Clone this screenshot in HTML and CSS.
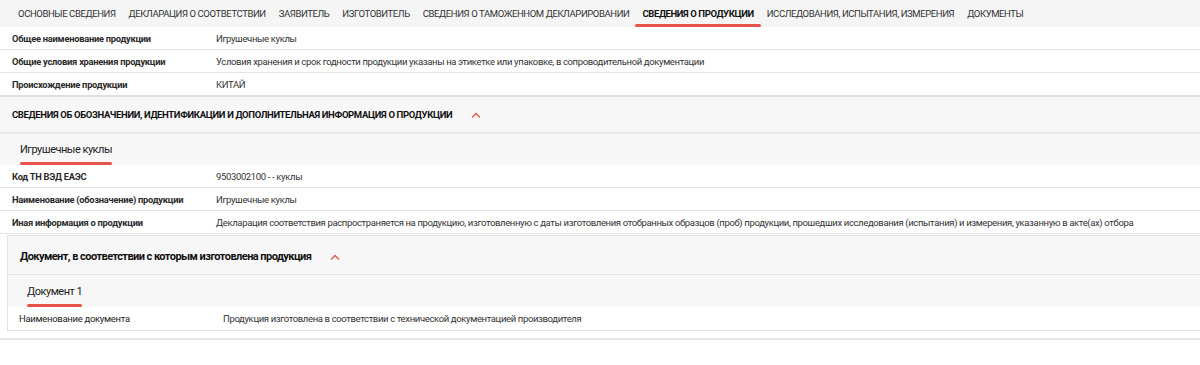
FILE: index.html
```html
<!DOCTYPE html>
<html lang="ru">
<head>
<meta charset="utf-8">
<link rel="stylesheet" href="styles.css">
</head>
<body>
<nav class="tabs">
  <span class="tab">ОСНОВНЫЕ СВЕДЕНИЯ</span>
  <span class="tab">ДЕКЛАРАЦИЯ О СООТВЕТСТВИИ</span>
  <span class="tab">ЗАЯВИТЕЛЬ</span>
  <span class="tab">ИЗГОТОВИТЕЛЬ</span>
  <span class="tab">СВЕДЕНИЯ О ТАМОЖЕННОМ ДЕКЛАРИРОВАНИИ</span>
  <span class="tab active">СВЕДЕНИЯ О ПРОДУКЦИИ</span>
  <span class="tab">ИССЛЕДОВАНИЯ, ИСПЫТАНИЯ, ИЗМЕРЕНИЯ</span>
  <span class="tab">ДОКУМЕНТЫ</span>
</nav>
<div class="rows">
  <div class="row"><div class="label">Общее наименование продукции</div><div class="value">Игрушечные куклы</div></div>
  <div class="row"><div class="label">Общие условия хранения продукции</div><div class="value">Условия хранения и срок годности продукции указаны на этикетке или упаковке, в сопроводительной документации</div></div>
  <div class="row last"><div class="label">Происхождение продукции</div><div class="value">КИТАЙ</div></div>
</div>
<section class="section">
  <div class="sec-head">
    <span class="sec-title">СВЕДЕНИЯ ОБ ОБОЗНАЧЕНИИ, ИДЕНТИФИКАЦИИ И ДОПОЛНИТЕЛЬНАЯ ИНФОРМАЦИЯ О ПРОДУКЦИИ</span>
    <svg class="chev" width="10" height="6" viewBox="0 0 10 6"><path d="M1 5.5 L5 1.5 L9 5.5" fill="none" stroke="#e5534b" stroke-width="1.3"/></svg>
  </div>
  <div class="subtabs"><span class="subtab">Игрушечные куклы</span></div>
  <div class="rows">
    <div class="row"><div class="label">Код ТН ВЭД ЕАЭС</div><div class="value">9503002100 - - куклы</div></div>
    <div class="row"><div class="label">Наименование (обозначение) продукции</div><div class="value">Игрушечные куклы</div></div>
    <div class="row"><div class="label">Иная информация о продукции</div><div class="value">Декларация соответствия распространяется на продукцию, изготовленную с даты изготовления отобранных образцов (проб) продукции, прошедших исследования (испытания) и измерения, указанную в акте(ах) отбора</div></div>
  </div>
  <div class="box">
    <div class="box-head">
      <span class="box-title">Документ, в соответствии с которым изготовлена продукция</span>
      <svg class="chev" width="10" height="6" viewBox="0 0 10 6"><path d="M1 5.5 L5 1.5 L9 5.5" fill="none" stroke="#e5534b" stroke-width="1.3"/></svg>
    </div>
    <div class="subtabs inner"><span class="subtab">Документ 1</span></div>
    <div class="row doc"><div class="label">Наименование документа</div><div class="value">Продукция изготовлена в соответствии с технической документацией производителя</div></div>
  </div>
</section>
</body>
</html>
```

FILE: styles.css
```css
* { box-sizing: border-box; }
body {
  margin: 0;
  font-family: Roboto, "Liberation Sans", sans-serif;
  font-size: 10px;
  color: #222;
  background: #fff;
}
.tabs {
  display: flex;
  gap: 13px;
  height: 27px;
  padding-left: 18px;
  background: #f5f5f5;
  align-items: stretch;
  white-space: nowrap;
}
.tab {
  display: flex;
  align-items: center;
  font-size: 9.5px;
  letter-spacing: -0.4px;
  color: #333;
  position: relative;
  padding-bottom: 1px;
}
.tab.active {
  font-weight: 700;
  color: #111;
}
.tab.active::after {
  content: "";
  position: absolute;
  left: -7px;
  right: -7px;
  bottom: 0;
  height: 3px;
  border-radius: 2px;
  background: #e5534b;
}
.row {
  display: flex;
  align-items: center;
  height: 23px;
  border-bottom: 1px solid #e4e4e4;
  padding-left: 12px;
  background: #fff;
  white-space: nowrap;
}
.row.last { height: 24px; border-bottom: 2px solid #dedede; }
.label {
  width: 204px;
  flex: none;
  font-weight: 700;
  font-size: 9.3px;
  letter-spacing: -0.25px;
  color: #2a2a2a;
}
.value {
  color: #333;
  font-size: 9.5px;
  letter-spacing: -0.36px;
}
.sec-head {
  display: flex;
  align-items: center;
  gap: 19px;
  height: 37px;
  padding-left: 12px;
  background: #f7f7f7;
  border-bottom: 2px solid #e8e8e8;
}
.sec-title {
  font-weight: 700;
  font-size: 9.5px;
  letter-spacing: -0.35px;
  color: #111;
}
.chev { margin-top: 1px; }
.subtabs {
  display: flex;
  align-items: flex-start;
  height: 31px;
  padding-left: 20px;
  background: #f7f7f7;
}
.subtab {
  display: block;
  padding-top: 9px;
  line-height: 13px;
  font-size: 11px;
  letter-spacing: -0.5px;
  color: #222;
}
.subtab::after {
  content: "";
  display: block;
  height: 3px;
  margin-top: 6px;
  border-radius: 2px;
  background: #e5534b;
}
.box {
  margin: 1px 0 0 7px;
  border: 1px solid #e2e2e2;
  border-right: none;
  background: #f7f7f7;
}
.box-head {
  display: flex;
  align-items: center;
  gap: 19px;
  height: 39px;
  padding: 2px 0 0 12px;
  border-bottom: 1px solid #e4e4e4;
}
.box-title {
  font-weight: 700;
  font-size: 11px;
  letter-spacing: -0.55px;
  color: #111;
}
.subtabs.inner { padding-left: 19px; height: 32px; }
.subtabs.inner .subtab { padding-top: 10px; }
.row.doc {
  padding-left: 11px;
  height: 23px;
  border-bottom: none;
}
.row.doc .label {
  font-weight: 400;
  font-size: 9.5px;
  letter-spacing: -0.3px;
  color: #222;
}
.section { border-bottom: 2px solid #e6e6e6; padding-bottom: 7px; }
```
